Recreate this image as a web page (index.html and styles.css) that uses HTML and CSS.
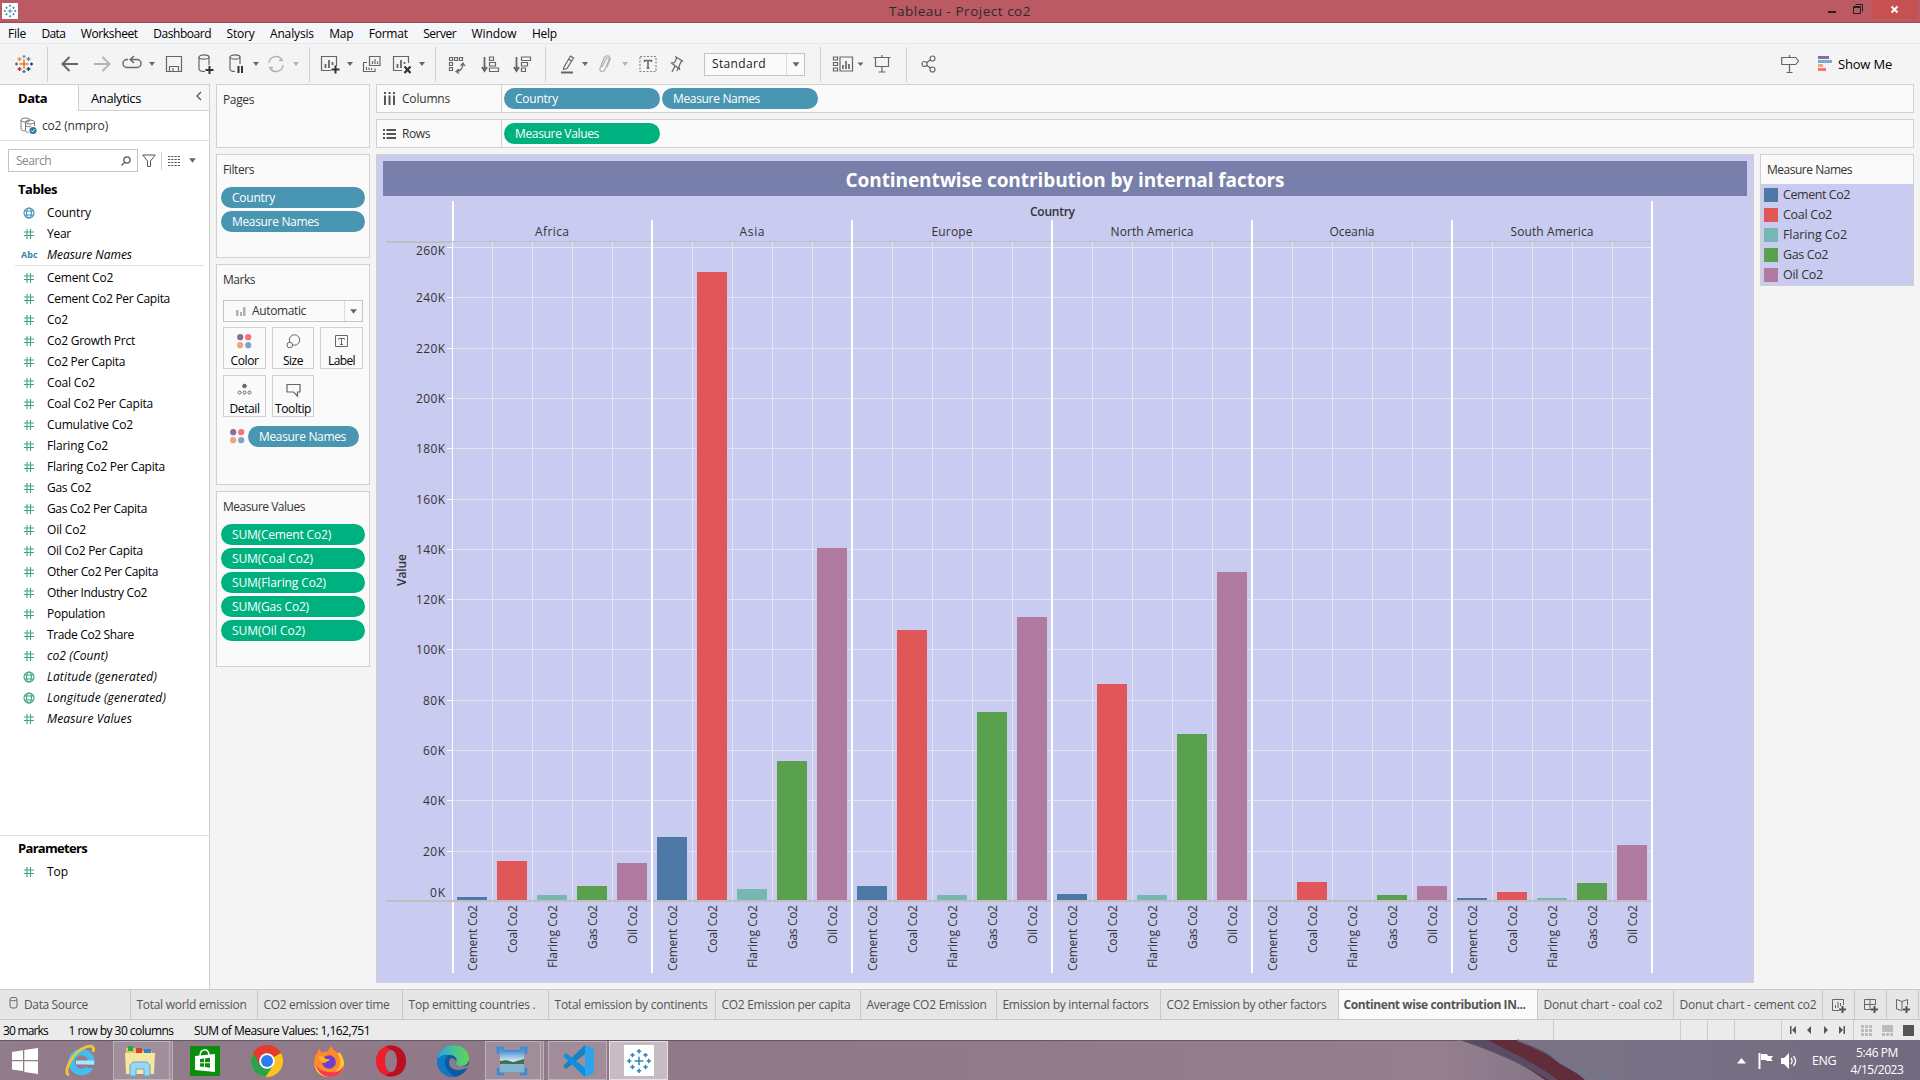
FILE: index.html
```html
<!DOCTYPE html>
<html lang="en">
<head>
<meta charset="utf-8">
<title>Tableau - Project co2</title>
<link rel="stylesheet" href="styles.css">
</head>
<body>
<svg class="defs" width="0" height="0">
  <symbol id="caret" viewBox="0 0 8 6"><path d="M1 1h6L4 5z" fill="#666"/></symbol>
  <symbol id="caret-off" viewBox="0 0 8 6"><path d="M1 1h6L4 5z" fill="#b4b4b4"/></symbol>
  <symbol id="hash" viewBox="0 0 12 12"><path d="M4 1v10M7.500 1v10M1 4h10M1 7.500h10" stroke="#3ca579" stroke-width="1.100" fill="none"/></symbol>
  <symbol id="globe" viewBox="0 0 12 12"><g fill="none" stroke="currentColor" stroke-width="1.100"><circle cx="6" cy="6" r="5"/><ellipse cx="6" cy="6" rx="2.400" ry="5"/><path d="M1.300 4h9.400M1.300 8h9.400"/></g></symbol>
  <symbol id="dots" viewBox="0 0 15 15"><circle cx="3.200" cy="3.200" r="3.100" fill="#86709a"/><circle cx="11.200" cy="3.200" r="3.100" fill="#fa707e"/><circle cx="3.200" cy="11.200" r="3.100" fill="#f2a477"/><circle cx="11.200" cy="11.200" r="3.100" fill="#81a3cb"/></symbol>
  <symbol id="marks" viewBox="0 0 24 24"><path d="M12 8v8M8 12h8M12 1v4M10 3h4M12 19v4M10 21h4M3 10v4M1 12h4M21 10v4M19 12h4M6 4.500v4M4 6.500h4M18 4.500v4M16 6.500h4M6 15.500v4M4 17.500h4M18 15.500v4M16 17.500h4" fill="none" stroke="currentColor" stroke-width="1.400"/></symbol>
</svg>

<header class="titlebar">
  <span class="appicon"><svg width="14" height="14"><use href="#marks"/></svg></span>
  <span class="title"><span data-w="142">Tableau - Project co2</span></span>
  <span class="winbtns">
    <svg width="10" height="20"><path d="M1 12h8" stroke="#222" stroke-width="2"/></svg>
    <svg width="12" height="20"><path d="M1.500 6.500h7v7h-7zM1.500 7.500h7M3.500 4.500h7v7" fill="none" stroke="#222"/></svg>
    <span class="close"><svg width="10" height="10"><path d="M1.500 1.500l6 6M7.500 1.500l-6 6" stroke="#fff" stroke-width="1.900"/></svg></span>
  </span>
</header>

<nav class="menu">
  <span data-w="18">File</span><span data-w="24">Data</span><span data-w="57">Worksheet</span><span data-w="58">Dashboard</span><span data-w="28">Story</span><span data-w="44">Analysis</span><span data-w="24">Map</span><span data-w="39">Format</span><span data-w="33">Server</span><span data-w="45">Window</span><span data-w="25">Help</span>
</nav>

<div class="toolbar">
  <svg width="18" height="18" viewBox="0 0 18 18" fill="none" stroke-width="1.300"><path d="M9 4.500v9M4.500 9h9" stroke="#e8762c" stroke-width="1.600"/><path d="M9 0v3M7.500 1.500h3" stroke="#7199a6"/><path d="M4.500 2v4M2.500 4h4" stroke="#eb912c"/><path d="M13.500 2v4M11.500 4h4" stroke="#59879b"/><path d="M1.500 7.500v3M0 9h3" stroke="#5b6591"/><path d="M16.500 7.500v3M15 9h3" stroke="#1f447e"/><path d="M4.500 12v4M2.500 14h4" stroke="#c72035"/><path d="M13.500 12v4M11.500 14h4" stroke="#1f447e"/><path d="M9 15v3M7.500 16.500h3" stroke="#5b6591"/></svg>
  <i class="sep"></i>
  <svg class="ic" width="18" height="18"><path d="M17 9H2M8.500 2L1.500 9l7 7" stroke-width="2"/></svg>
  <svg class="ic off" width="18" height="18"><path d="M1 9h15M9.500 2l7 7-7 7" stroke-width="2"/></svg>
  <svg class="ic" width="20" height="18"><path d="M6 4.500H5a4 4 0 0 0 0 8h10a4 4 0 0 0 0-8H8M12 1L8.200 4.500 12 8" stroke-width="1.500"/></svg>
  <svg width="8" height="6"><use href="#caret"/></svg>
  <svg class="ic" width="18" height="18"><path d="M1.500 1.500h15v15h-15zM4.500 16.500v-5h9v5M8 13v3.500"/></svg>
  <svg class="ic" width="20" height="22"><path d="M9 18.500c-3.500 0-6-.8-6-2.500V4M13 4v8"/><ellipse cx="8" cy="4" rx="5" ry="2.200"/><path d="M13.500 13v8M9.500 17h8" stroke="#333" stroke-width="2"/></svg>
  <svg class="ic" width="20" height="22"><path d="M9 18.500c-3 0-5-.8-5-2.500V4M14 4v7"/><ellipse cx="9" cy="4" rx="5" ry="2.200"/><path d="M12.500 13v7M16 13v7" stroke="#333" stroke-width="2"/></svg>
  <svg width="8" height="6"><use href="#caret"/></svg>
  <svg class="ic off" width="18" height="18"><path d="M2 8a7 7 0 0 1 13-3M16 10a7 7 0 0 1-13 3M12 5.500h4M2 12.500h4" stroke-width="1.500"/></svg>
  <svg width="8" height="6"><use href="#caret-off"/></svg>
  <i class="sep"></i>
  <svg class="ic" width="20" height="20"><path d="M11 16.500H1.500v-14h15V12"/><path d="M5.500 14v-4M9 14V6M12.500 11V8" stroke-width="1.800"/><path d="M15.500 11.500v8M11.500 15.500h8" stroke="#333" stroke-width="2"/></svg>
  <svg width="8" height="6"><use href="#caret"/></svg>
  <svg class="ic" width="18" height="20"><path d="M6.500 2.500h10.500v9H6.500zM4 8.500H.5v9H12v-3M9.500 10V7M12 10V5M14.500 10V7.500M3.500 16v-3M6 16v-2.500M8.500 16v-2" stroke-width="1.200"/></svg>
  <svg class="ic" width="20" height="20"><path d="M10 16.500H1.500v-14h15V9"/><path d="M5.500 14v-4M9 14V6M12.500 10V8" stroke-width="1.800"/><path d="M12.500 12.500l6 6.500M18.500 12.500l-6 6.500" stroke="#333" stroke-width="2.200"/></svg>
  <svg width="8" height="6"><use href="#caret"/></svg>
  <i class="sep"></i>
  <svg class="ic" width="18" height="20"><path d="M1.500 3.500h3v3h-3zM6.500 3.500h3v3h-3zM11.500 3.500h3v3h-3zM1.500 8.500h3v3h-3zM1.500 13.500h3v3h-3zM8 17.500c4 0 7-3 7-7M11 15l-3 2.500 3 2M12.500 12l2.500-3 2 3" stroke-width="1.200"/></svg>
  <svg class="ic" width="19" height="18"><path d="M3.500 2v13M1 12l2.500 4L6 12" stroke-width="1.800"/><path d="M8.500 2h4v3.500h-4zM8.500 7.500h6V11h-6zM8.500 13h9v3.500h-9z" stroke-width="1.200"/></svg>
  <svg class="ic" width="19" height="18"><path d="M3.500 2v13M1 12l2.500 4L6 12" stroke-width="1.800"/><path d="M8.500 2h9v3.500h-9zM8.500 7.500h6V11h-6zM8.500 13h4v3.500h-4z" stroke-width="1.200"/></svg>
  <i class="sep"></i>
  <svg class="ic" width="16" height="20"><path d="M4 13l6.500-11 3 2L7 14.500l-3.500 1zM8.500 5l3 2"/><path d="M1 18.500h12" stroke-width="2"/></svg>
  <svg width="8" height="6"><use href="#caret"/></svg>
  <svg class="ic off" width="14" height="20"><path d="M4 13l4-8c1-2 3.500-1 3 1L7 15.500c-1.500 3.500-6 2-5-1L6 4c1.500-3.500 7-2.500 6 1.500L9 13" stroke-width="1.300"/></svg>
  <svg width="8" height="6"><use href="#caret-off"/></svg>
  <svg class="ic" width="18" height="18"><path d="M1 1.500h16v15H1z" stroke-dasharray="2 1.500" stroke="#888"/><path d="M5.500 7V5.500h7V7M9 5.500v7.500M7.500 13h3" stroke-width="1.500"/></svg>
  <svg class="ic" width="14" height="20"><path d="M6 3l6.500 4-1.500 1-2 4 .5 3L1.500 9l3-.5 2-4zM5 12l-3 6M8 14l-1 3"/></svg>
  <div class="select"><span data-w="54">Standard</span><b><svg width="10" height="7"><use href="#caret"/></svg></b></div>
  <i class="sep"></i>
  <svg class="ic" width="30" height="18"><path d="M.5 2h4v3h-4zM.5 7.500h4v3h-4zM.5 13h4v3h-4zM7 2h12.500v14H7z"/><path d="M10 14v-4M13 14V6M16 14V9" stroke-width="1.700"/><path d="M24.500 7.500h6l-3 3.500z" fill="#666" stroke="none"/></svg>
  <svg class="ic" width="18" height="18"><path d="M.5 2.500h17M9 0v2M2.500 2.500v9h13v-9M9 11.500v5M5.500 17h7"/></svg>
  <i class="sep"></i>
  <svg class="ic" width="16" height="18"><circle cx="3.500" cy="9" r="2.500"/><circle cx="11.500" cy="3.500" r="2.500"/><circle cx="11.500" cy="14.500" r="2.500"/><path d="M5.700 7.700L9 5M5.700 10.300L9.300 13"/></svg>
  <span></span>
  <svg class="ic" width="18" height="20"><path d="M.7 3.500h14l2.800 3.500-2.800 3.500H.7zM8.500 1v2.500M8.500 10.500V19M5.500 18.500h6"/></svg>
  <div class="showme"><svg width="14" height="16"><path d="M0 0h11v3H0z" fill="#86709a"/><path d="M0 4h14v3H0z" fill="#7fa6d0"/><path d="M0 8h5v3H0z" fill="#f4a273"/><path d="M0 12h8v3H0z" fill="#fa707e"/></svg><span data-w="54">Show Me</span></div>
</div>

<main class="work">
  <aside class="data">
    <div class="tabs"><div class="tab on"><span data-w="29">Data</span></div><div class="tab"><span data-w="50">Analytics</span><svg width="6" height="10"><path d="M5 1L1 5l4 4" fill="none" stroke="#555" stroke-width="1.300"/></svg></div></div>
    <div class="source"><svg width="18" height="18" fill="none" stroke="#777"><ellipse cx="5.500" cy="3" rx="4.500" ry="2"/><path d="M1 3v9c0 1 1.500 2 4 2"/><ellipse cx="10" cy="5" rx="4.500" ry="2"/><path d="M5.500 5v8c0 2 2 2.500 3 2.500M14.500 5v4M6 9c2 1 4 1 5 0"/><circle cx="13" cy="13.500" r="3.600" fill="#2c7d9f" stroke="none"/><path d="M11.300 13.500l1.200 1.300 2.200-2.500" stroke="#fff"/></svg><span data-w="66">co2 (nmpro)</span></div>
    <div class="find">
      <div class="box"><span data-w="35">Search</span><svg width="10" height="10" fill="none" stroke="#555" stroke-width="1.200"><circle cx="6" cy="4" r="3.200"/><path d="M3.500 6.500L.5 9.500"/></svg></div>
      <svg width="14" height="14"><path d="M.7 1h12.600L8.500 7v5.500h-3V7z" fill="none" stroke="#555"/></svg>
      <i></i>
      <svg width="13" height="10" stroke="#555"><path d="M0 .5h12M0 3.500h12M0 6.500h12M0 9.500h12" stroke-dasharray="2.250 1" stroke-width="1.200" fill="none"/></svg>
      <svg width="9" height="7"><use href="#caret"/></svg>
    </div>
    <h2><span data-w="39">Tables</span></h2>
    <ul class="fields" id="dims"></ul>
    <ul class="fields measures" id="measures"></ul>
    <div class="params"><h2><span data-w="69">Parameters</span></h2><ul class="fields" id="params"></ul></div>
  </aside>

  <section class="cards">
    <div class="card pages"><h3><span data-w="31">Pages</span></h3></div>
    <div class="card filters"><h3><span data-w="31">Filters</span></h3>
      <div class="pill"><span data-w="43">Country</span></div><div class="pill"><span data-w="87">Measure Names</span></div></div>
    <div class="card markscard"><h3><span data-w="32">Marks</span></h3>
      <div class="marktype"><svg width="12" height="12" fill="#b0b0b0"><path d="M1 5h2.500v6H1zM5 7h2v4H5zM8 2h2.500v9H8z"/></svg><span data-w="54">Automatic</span><b><svg width="9" height="7"><use href="#caret"/></svg></b></div>
      <div class="markgrid">
        <div><svg width="15" height="15"><use href="#dots"/></svg><span data-w="28">Color</span></div>
        <div><svg width="15" height="15" fill="none" stroke="#666"><circle cx="8.500" cy="6" r="5.200"/><circle cx="3.800" cy="11" r="2.800" fill="#fafafa"/></svg><span data-w="20">Size</span></div>
        <div><svg width="15" height="15" fill="none" stroke="#666"><path d="M1.500 1.500h12v11h-12zM4.500 5.500v-1h6v1M7.500 4.500v6M6 10.500h3"/></svg><span data-w="27">Label</span></div>
        <div><svg width="15" height="15" fill="none" stroke="#666"><circle cx="7.500" cy="4" r="1.800" fill="#666"/><circle cx="2.500" cy="10.500" r="1.500"/><circle cx="7.500" cy="10.500" r="1.500"/><circle cx="12.500" cy="10.500" r="1.500"/></svg><span data-w="30">Detail</span></div>
        <div><svg width="15" height="15" fill="none" stroke="#666" stroke-width="1.200"><path d="M1 2.500h13v7.500h-2.500v4L7.500 10H1z"/></svg><span data-w="36">Tooltip</span></div>
      </div>
      <div class="encode"><svg width="15" height="15"><use href="#dots"/></svg><div class="pill"><span data-w="87">Measure Names</span></div></div>
    </div>
    <div class="card values"><h3><span data-w="82">Measure Values</span></h3>
      <div class="pill g"><span data-w="99">SUM(Cement Co2)</span></div><div class="pill g"><span data-w="81">SUM(Coal Co2)</span></div><div class="pill g"><span data-w="94">SUM(Flaring Co2)</span></div><div class="pill g"><span data-w="77">SUM(Gas Co2)</span></div><div class="pill g"><span data-w="73">SUM(Oil Co2)</span></div></div>
  </section>

  <section class="view">
    <div class="shelf"><div class="name"><svg width="13" height="14" fill="#555"><path d="M1 0h2v2H1zM5.500 0h2v2h-2zM10 0h2v2h-2zM1 3.500h2V13H1zM5.500 3.500h2V13h-2zM10 3.500h2V13h-2z"/></svg><span data-w="48">Columns</span></div><div class="pill"><span data-w="43">Country</span></div><div class="pill"><span data-w="87">Measure Names</span></div></div>
    <div class="shelf"><div class="name"><svg width="13" height="14" fill="#555"><path d="M0 2h2v2H0zM0 6h2v2H0zM0 10h2v2H0zM3.500 2H13v2H3.500zM3.500 6H13v2H3.500zM3.500 10H13v2H3.500z"/></svg><span data-w="28">Rows</span></div><div class="pill g"><span data-w="84">Measure Values</span></div></div>
    <div class="canvas">
      <div class="viz">
        <h1><span data-w="439">Continentwise contribution by internal factors</span></h1>
        <svg id="chart" width="1364" height="784" viewBox="383 197 1364 784"></svg>
      </div>
      <div class="legend"><h3><span data-w="85">Measure Names</span></h3><ul id="legend"></ul></div>
    </div>
  </section>
</main>

<nav class="sheets">
  <div class="ds"><svg width="9" height="12" fill="none" stroke="#666"><rect x="1" y=".5" width="7" height="10.500" rx="2"/><path d="M1 3c2 1 5 1 7 0"/></svg><span data-w="64">Data Source</span></div>
  <div><span data-w="110">Total world emission</span></div><div><span data-w="126">CO2 emission over time</span></div><div><span data-w="127">Top emitting countries .</span></div><div><span data-w="153">Total emission by continents</span></div><div><span data-w="129">CO2 Emission per capita</span></div><div><span data-w="120">Average CO2 Emission</span></div><div><span data-w="146">Emission by internal factors</span></div><div><span data-w="160">CO2 Emission by other factors</span></div><div class="on"><span data-w="182">Continent wise contribution IN...</span></div><div><span data-w="119">Donut chart - coal co2</span></div><div><span data-w="137">Donut chart - cement co2</span></div>
  <div class="add"><svg width="16" height="16" fill="none" stroke="#666"><path d="M8 12.500H1.500v-11h11V7M4.500 10V7M7 10V4M9.500 8V5"/><path d="M11.500 8v7M8 11.500h7" stroke="#555" stroke-width="2"/></svg></div>
  <div class="add"><svg width="16" height="16" fill="none" stroke="#666"><path d="M8 11.500H1.500v-10h11V7M7 1.500v10M1.500 6.500h11"/><path d="M11.500 8v7M8 11.500h7" stroke="#555" stroke-width="2"/></svg></div>
  <div class="add"><svg width="16" height="16" fill="none" stroke="#666"><path d="M7 12.500L1.500 11V1.500L7 3.500v9M7 3.500l5.500-2V7"/><path d="M11.500 8v7M8 11.500h7" stroke="#555" stroke-width="2"/></svg></div>
</nav>

<div class="status">
  <div><span data-w="45">30 marks</span><span data-w="105">1 row by 30 columns</span><span data-w="176">SUM of Measure Values: 1,162,751</span></div>
  <div></div><div></div><div></div><div></div>
  <div class="nav"><svg width="8" height="8"><path d="M1 0h1.500v8H1zM7 0v8L3 4z" fill="#555"/></svg><svg width="8" height="8"><path d="M6 0v8L2 4z" fill="#555"/></svg><svg width="8" height="8"><path d="M2 0v8l4-4z" fill="#555"/></svg><svg width="8" height="8"><path d="M5.500 0H7v8H5.500zM1 0v8l4-4z" fill="#555"/></svg></div>
  <div class="modes"><svg width="11" height="11" fill="#bcbcbc"><path d="M0 0h3v3H0zM4 0h3v3H4zM8 0h3v3H8zM0 4h3v3H0zM4 4h3v3H4zM8 4h3v3H8zM0 8h3v3H0zM4 8h3v3H4zM8 8h3v3H8z"/></svg><svg width="11" height="11" fill="#bcbcbc"><path d="M0 0h11v7H0zM0 8h3v3H0zM4 8h3v3H4zM8 8h3v3H8z"/></svg><svg width="11" height="11"><path d="M0 0h11v11H0z" fill="#555"/></svg></div>
</div>

<footer class="taskbar">
  <svg class="swoosh" width="520" height="40" viewBox="0 0 520 40"><defs><linearGradient id="sw" x1="0" x2="1"><stop offset="0" stop-color="#7d7488"/><stop offset="1" stop-color="#726b7f"/></linearGradient></defs><path d="M55 0H520V40H180C150 24 120 10 55 0z" fill="url(#sw)"/><path d="M75 0h42c16 7 28 10 36 18 6 7 22 12 32 22h-40C125 26 100 12 75 0z" fill="#632c3b"/><path d="M60 0h28c22 12 50 24 70 40h-9C122 24 95 12 60 0z" fill="#5a4c62"/><path d="M117 0c20 8 34 14 44 23 12 5 30 9 46 17" stroke="#607d95" stroke-width="2.500" fill="none" opacity=".45"/></svg>
  <svg width="26" height="26" fill="#fff"><path d="M0 4l11-1.700V12H0zM12.300 2L26 0v12H12.300zM0 13.300h11v9.800L0 21.500zM12.300 13.300H26V26l-13.700-2z"/></svg>
  <svg width="34" height="34" viewBox="2 0 34 34" fill="none"><circle cx="18.500" cy="18" r="10" stroke="#45bdf1" stroke-width="6.500"/><path d="M13 18.500h18" stroke="#a9e6ff" stroke-width="4"/><path d="M24 21h9v3h-9z" fill="#907a88"/><path d="M6 31C-1 29 10 7 23 3c6-2 9 0 7 5" stroke="#f3c532" stroke-width="2.800"/></svg>
  <div class="app stack"><svg width="34" height="34" viewBox="0 0 34 34"><path d="M3 4h9l2 3h15v22H3z" fill="#e4c363"/><path d="M5 2h5v5H5z" fill="#29a34a"/><path d="M13 4h6v5h-6z" fill="#d6412c"/><path d="M21 5h7v5h-7z" fill="#2f83cf"/><path d="M2 9h30l-1 21H3z" fill="#f8e59e"/><path d="M7 32V21l3-3h14l3 3v11h-6v-7h-8v7z" fill="#9cd5f0" stroke="#5ba9d3"/></svg></div>
  <svg width="30" height="30" viewBox="0 0 30 30"><path d="M0 0h30v30H0z" fill="#098f0b"/><path d="M5 10l20-2v18L5 24z" fill="#fff"/><path d="M10 10c0-8 9-8 9-1" fill="none" stroke="#fff" stroke-width="1.500"/><path d="M10 13l4-.5v3.700h-4zM15 12.400l5-.7v4.500h-5zM10 17.300h4V21l-4-.5zM15 17.300h5v4.500l-5-.7z" fill="#098f0b"/></svg>
  <svg width="32" height="32" viewBox="-16 -16 32 32"><circle r="16" fill="#fcc31e"/><path d="M0 0L-13.900-8A16 16 0 0 1 13.900-8z" fill="#e33b2e"/><path d="M0 0L-13.900-8A16 16 0 0 0-1.500 16L6.500 4z" fill="#2ba24c"/><path d="M0-8h13.900a16 16 0 0 0-27.800 0L-7 4z" fill="#e33b2e"/><circle r="7.800" fill="#fff"/><circle r="6" fill="#2a7cf0"/></svg>
  <svg width="32" height="32" viewBox="0 0 32 32"><path d="M4 8l2-4 3 4c2-2 4-2 6-1 0-3 2-5 4-6 0 4 4 5 6 8l1-2c3 3 5 8 5 12 0 8-7 13-15 13S1 26 1 18c0-4 1-7 3-10z" fill="#ff8a26"/><path d="M19 1c0 4 5 6 7 10 4 9-2 18-11 18-7 0-12-4-13-10 0 8 6 13 14 13S31 27 31 19c0-4-2-9-5-12l-1 2c-2-3-6-4-6-8z" fill="#ffc933"/><path d="M3 20c2 8 8 12 14 12 8 0 13-5 14-12-3 6-8 8-14 7-6 0-11-2-14-7z" fill="#f63a54"/><circle cx="16" cy="17" r="6.800" fill="#6c3fce"/><path d="M5 12c3-2 6 0 8 2 2 0 4 0 4 1l-4 2c-2 2-5 1-8-5z" fill="#ffb02e"/></svg>
  <svg width="30" height="32" viewBox="0 0 30 32"><path d="M15 .5C6 .5 0 7 0 16s6 15.500 15 15.500S30 25 30 16 24 .5 15 .5zm0 4.500c4 0 6 5 6 11s-2 11-6 11-6-5-6-11 2-11 6-11z" fill="#f01d2c" fill-rule="evenodd"/><path d="M15 .5C24 .5 30 7 30 16s-6 15.500-15 15.500c-2 0-4-.5-5.500-1l5.500-3.500c4 0 6-5 6-11s-2-11-6-11L9.500 1.500C11 1 13 .5 15 .5z" fill="#a20b1b" opacity=".7"/></svg>
  <svg width="32" height="32" viewBox="0 0 32 32"><defs><linearGradient id="ed" x1="0" x2="1"><stop offset="0" stop-color="#25a8e0"/><stop offset="1" stop-color="#63d754"/></linearGradient></defs><circle cx="16" cy="16" r="16" fill="#0c59a4"/><path d="M0 15C1 6 8 0 16 0c10 0 16 7 16 13 0 5-3 8-8 8-4 0-6-1-5-3 2-4-1-8-6-8C7 10 2 12 0 15z" fill="url(#ed)"/><path d="M0 15c2-4 7-6 12-5-5 3-5 10-2 14 2 4 6 7 9 7.600C8 33-1 25 0 15z" fill="#1478c8"/><path d="M13 14c-3 5 1 11 8 11 4 0 8-2 9-2l2-4c-3 3-5 2-8 2-4 0-6-1-5-3 1-3-4-6-6-4z" fill="#907a88"/></svg>
  <div class="app stack"><svg width="30" height="28" viewBox="0 0 30 28"><defs><linearGradient id="sky" x1="0" y1="0" x2="0" y2="1"><stop offset="0" stop-color="#3d86cf"/><stop offset="1" stop-color="#e4f3f8"/></linearGradient></defs><path d="M3 3h24v22H3z" fill="#7fb6d3"/><path d="M3 3h24v12H3z" fill="url(#sky)"/><path d="M3 14l6-1 7 2 11-3v5H3z" fill="#41714f"/><path d="M1 7V1h6M23 1h6v6M29 21v6h-6M7 27H1v-6" fill="none" stroke="#2f8fe0" stroke-width="2.500"/></svg></div>
  <i></i>
  <div class="app"><svg width="32" height="32" viewBox="0 0 32 32"><path d="M23 0l9 4v24l-9 4z" fill="#2aa4ee"/><path d="M23 0v9L4 24l-3-3z" fill="#1680c4"/><path d="M23 32v-9L4 8l-3 3z" fill="#0e8fe0"/></svg></div>
  <i></i>
  <div class="app live"><span class="tile"><svg width="26" height="26"><use href="#marks"/></svg></span></div>
  <span></span>
  <div class="tray"><svg width="9" height="6"><path d="M0 5.500L4.500 0 9 5.500z" fill="#fff"/></svg><svg width="16" height="18"><path d="M1.500 1v16" stroke="#fff" stroke-width="2"/><path d="M3 2h6l1 2h5l-2 3 2 2H9L8 8H3z" fill="#fff"/></svg><svg width="17" height="16"><path d="M0 5h3l5-5v16l-5-5H0z" fill="#fff"/><path d="M10 5c1.500 2 1.500 4 0 6M12.500 3c2.500 3 2.500 7 0 10" fill="none" stroke="#fff" stroke-width="1.300"/></svg><span class="lang"><span data-w="24">ENG</span></span><span class="clock"><span data-w="42">5:46 PM</span><span data-w="53">4/15/2023</span></span></div>
</footer>
<script src="app.js"></script>
</body>
</html>
```

FILE: styles.css
```css
* { box-sizing: border-box; margin: 0; padding: 0; }
body { width: 1920px; height: 1080px; overflow: hidden; background: #f4f4f4; color: #000; font: 12px/16px "Open Sans", "Noto Sans", sans-serif; display: flex; flex-direction: column; }
ul { list-style: none; }
svg { display: block; flex: none; overflow: visible; }
.defs { position: absolute; }
span { white-space: pre; }
h1, h2, h3 { font-weight: 400; }

.titlebar { height: 23px; flex: none; background: #bc5a64; border-bottom: 1px solid #9c4a53; display: grid; grid-template-columns: 200px 1fr 200px; }
.appicon { width: 16px; height: 16px; margin: 3px 0 0 2px; background: #fff; color: #2a7fae; display: grid; place-items: center; }
.title { font-size: 13.500px; line-height: 23px; color: #2b2b2b; text-align: center; }
.winbtns { display: flex; justify-content: flex-end; gap: 15px; padding-right: 3px; }
.close { width: 45px; height: 19px; background: #c75050; display: grid; place-items: center; margin-left: -7px; }

.menu { height: 21px; flex: none; background: #f5f6f7; border-bottom: 1px solid #e8e8e8; display: flex; gap: 15.400px; padding: 3px 0 0 8px; }

.toolbar { height: 40px; flex: none; display: grid; align-items: center; justify-items: center; grid-template-columns: 47px 1px 43px 22px 37px 4px 40px 24px 36px 4px 35px 6px 20px 22px 18px 25px 36px 4px 23px 20px 46px 18px 28px 18px 16px 24px 16px 29px 30px 125px 6px 50px 18px 31px 14px 1fr 18px 121px; }
.ic { fill: none; stroke: #666; stroke-width: 1.200; }
.off { stroke: #b4b4b4; }
.sep { width: 1px; height: 35px; background: #d0d0d0; margin-top: 1px; }
.select { width: 101px; height: 23px; border: 1px solid #c4c4c4; background: #fafafa; display: flex; justify-content: space-between; align-items: center; padding-left: 7px; color: #222; }
.select b, .marktype b { width: 18px; align-self: stretch; border-left: 1px solid #ddd; display: grid; place-items: center; }
.showme { display: flex; align-items: center; gap: 6px; justify-self: start; padding-left: 19px; font-size: 13px; }

.work { height: 905px; flex: none; display: grid; grid-template-columns: 210px 166px 1fr; }
.data { background: #fff; border: 1px solid #d0d0d0; border-left: 0; border-bottom: 0; height: 905px; display: flex; flex-direction: column; }
.tabs { display: flex; height: 26px; font-size: 13px; flex: none; }
.tab { flex: 1; background: #f8f8f8; border: 1px solid #d0d0d0; border-width: 0 0 1px 1px; display: flex; justify-content: space-between; align-items: center; padding: 0 7px 0 12px; }
.tab svg { margin-top: -4px; }
.tab.on { flex: 0 0 78px; background: #fff; border: 0; padding-left: 18px; font-weight: 700; }
.source { height: 30px; flex: none; border-bottom: 1px solid #e0e0e0; display: flex; align-items: center; gap: 4px; padding-left: 20px; color: #333; }
.find { margin: 8px 0 0 8px; display: flex; align-items: center; }
.find .box { width: 130px; height: 23px; border: 1px solid #c4c4c4; display: flex; align-items: center; justify-content: space-between; padding: 0 6px 0 7px; color: #888; margin-right: 4px; }
.find i { width: 1px; height: 18px; background: #d0d0d0; margin: 0 6px 0 5px; }
.find svg:last-child { margin-left: 7px; }
.data h2 { font-size: 13px; font-weight: 700; line-height: 18px; padding-left: 18px; margin: 8px 0 4px; }
.fields li { height: 21px; line-height: 20px; display: grid; grid-template-columns: 12px 1fr; column-gap: 12px; align-items: center; padding-left: 23px; }
.fields .calc > span { font-style: italic; }
.fields .abc { font: 700 9px/12px "Open Sans", sans-serif; color: #3c83a3; margin-left: -2px; }
.dim { color: #3f8fb5; }
.mea { color: #3ca579; }
.measures { border-top: 1px solid #e0e0e0; margin: 0 5px 0 15px; padding-top: 1px; }
.measures li { padding-left: 8px; }
.data .params { margin-top: auto; height: 154px; border-top: 1px solid #e0e0e0; }
.data .params h2 { margin: 3px 0 4px; }

.cards { padding: 0 6px; display: flex; flex-direction: column; gap: 6px; }
.card { background: #fafafa; border: 1px solid #d0d0d0; padding: 7px 4px 0; flex: none; }
.card h3, .legend h3 { padding-left: 2px; color: #333; font-size: 12px; line-height: 16px; }
.pages { height: 64px; }
.filters { height: 104px; }
.filters h3 { margin-bottom: 9px; }
.filters .pill + .pill { margin-top: 3px; }
.markscard { height: 221px; }
.values { height: 176px; }
.values h3 { margin-bottom: 9px; }
.values .pill { margin-bottom: 3px; }
.pill { height: 21px; border-radius: 11px; background: #4996b2; color: #fff; line-height: 21px; padding-left: 11px; }
.pill.g { background: #00b180; }
.marktype { margin: 12px 2px 5px 2px; height: 22px; border: 1px solid #c4c4c4; display: flex; align-items: center; padding-left: 11px; gap: 5px; color: #333; }
.marktype b { margin-left: auto; }
.markgrid { margin: 0 1px 0 2px; display: grid; grid-template-columns: 43px 42px 43px; grid-auto-rows: 42px; column-gap: 6px; row-gap: 6px; }
.markgrid div { border: 1px solid #d0d0d0; display: flex; flex-direction: column; align-items: center; padding-top: 6px; gap: 4px; line-height: 16px; }
.encode { display: flex; align-items: center; margin: 9px 6px 0 9px; gap: 3px; }
.encode .pill { flex: 1; }

.view { padding-right: 6px; display: flex; flex-direction: column; gap: 6px; }
.shelf { height: 29px; flex: none; border: 1px solid #d0d0d0; background: #fafafa; display: flex; align-items: center; gap: 2px; }
.shelf .name { width: 125px; height: 27px; border-right: 1px solid #d0d0d0; display: flex; align-items: center; gap: 6px; padding: 1px 0 0 6px; color: #333; }
.shelf .pill { width: 156px; line-height: 22px; }
.canvas { display: flex; justify-content: space-between; align-items: flex-start; }
.viz { width: 1378px; height: 829px; background: #c9cbf0; border: 1px solid #d0d0d0; padding: 6px; }
.viz h1 { height: 35px; margin-bottom: 1px; background: #787faa; color: #fff; font-size: 19px; font-weight: 700; line-height: 38px; text-align: center; }
.viz text { font: 12px "Open Sans", sans-serif; fill: #333; }
.viz text.b { font-weight: 600; }
.legend { width: 154px; height: 132px; border: 1px solid #d0d0d0; background: #c9cbf0; }
.legend h3 { background: #fafafa; height: 29px; padding: 7px 0 0 6px; }
.legend li { height: 20px; display: flex; align-items: center; gap: 5px; padding-left: 3px; color: #333; font-size: 12.500px; }
.legend ul { padding-top: 1px; }
.swatch { width: 14px; height: 14px; }

.sheets { height: 31px; flex: none; background: #e6e6e6; border: 1px solid #c8c8c8; border-width: 1px 0; display: grid; grid-template-columns: 131px 127px 145px 146px 167px 145px 136px 164px 178px 199px 136px 149px 32px 32px 32px; color: #555; }
.sheets div { border-right: 1px solid #c8c8c8; padding: 7px 0 0 5.500px; }
.sheets .ds { display: flex; gap: 6px; padding-left: 9px; }
.sheets .on { background: #fafafa; font-weight: 700; padding-left: 4.500px; }
.sheets .add { padding: 8px 0 0 8px; }

.status { height: 20px; flex: none; background: #ebebeb; display: grid; grid-template-columns: 1554px 127px 27px 27px 47px 72px 1fr; }
.status div { border-right: 1px solid #ccc; }
.status div:first-child { display: flex; gap: 20.500px; padding: 3px 0 0 3px; }
.status .nav { display: flex; align-items: center; justify-content: space-around; padding: 0 3px; }
.status .modes { display: flex; align-items: center; gap: 10px; padding-left: 7px; border: 0; }

.taskbar { height: 40px; flex: none; position: relative; border-top: 1px solid #635866; background: linear-gradient(90deg, #927c8b, #8f7887 40%, #957f8e 75%, #746c80 86%); display: grid; align-items: center; justify-items: center; grid-template-columns: 50px 63px 60px 64px 60px 64px 60px 64px 59px 4px 59px 2px 59px 1fr 183px; }
.swoosh { position: absolute; right: 0; top: -1px; }
.app { align-self: stretch; justify-self: stretch; border: 1px solid #bfb0ba; background: rgba(255, 255, 255, .15); display: grid; place-items: center; }
.stack { border-right: 4px double #bfb0ba; padding-right: 3px; }
.live { background: rgba(255, 255, 255, .5); border-color: #e8e0e5; }
.tile { width: 30px; height: 31px; background: #fff; color: #2f86b5; display: grid; place-items: center; }
.tray { position: relative; justify-self: stretch; height: 39px; display: grid; align-items: center; justify-items: center; grid-template-columns: 9px 39px 9px 60px 46px; color: #fff; }
.clock { display: grid; justify-items: center; line-height: 17px; font-size: 12px; }
.lang { font-size: 12.500px; }
```

FILE: app.js
```js
const dims = [['globe', 'Country', 44], ['hash', 'Year', 24], ['abc', 'Measure Names', 85, 1]];
const measures = [['hash', 'Cement Co2', 66], ['hash', 'Cement Co2 Per Capita', 123], ['hash', 'Co2', 21], ['hash', 'Co2 Growth Prct', 88], ['hash', 'Co2 Per Capita', 78], ['hash', 'Coal Co2', 48], ['hash', 'Coal Co2 Per Capita', 106], ['hash', 'Cumulative Co2', 86], ['hash', 'Flaring Co2', 61], ['hash', 'Flaring Co2 Per Capita', 118], ['hash', 'Gas Co2', 44], ['hash', 'Gas Co2 Per Capita', 100], ['hash', 'Oil Co2', 39], ['hash', 'Oil Co2 Per Capita', 96], ['hash', 'Other Co2 Per Capita', 111], ['hash', 'Other Industry Co2', 100], ['hash', 'Population', 58], ['hash', 'Trade Co2 Share', 87], ['hash', 'co2 (Count)', 61, 1], ['globe', 'Latitude (generated)', 110, 1], ['globe', 'Longitude (generated)', 119, 1], ['hash', 'Measure Values', 85, 1]];

function fieldRows(id, rows, tone) {
  document.getElementById(id).innerHTML = rows.map(([icon, name, w, calc]) => {
    const mark = icon === 'abc' ? '<b class="abc">Abc</b>' : `<svg class="${tone}" width="12" height="12"><use href="#${icon}"/></svg>`;
    return `<li class="${calc ? 'calc' : ''}">${mark}<span><span data-w="${w}">${name}</span></span></li>`;
  }).join('');
}
fieldRows('dims', dims, 'dim');
fieldRows('measures', measures, 'mea');
fieldRows('params', [['hash', 'Top', 21]], 'mea');

const series = [['Cement Co2', '#4e79a7', 66], ['Coal Co2', '#e15759', 48], ['Flaring Co2', '#76b7b2', 63], ['Gas Co2', '#59a14f', 44], ['Oil Co2', '#b07aa1', 39]];
document.getElementById('legend').innerHTML = series.map(([n, c, w]) =>
  `<li><svg class="swatch"><rect width="14" height="14" fill="${c}"/></svg><span data-w="${w + 1}">${n}</span></li>`).join('');

// Bar heights in pixels above the zero line, one row per continent
const regions = [
  ['Africa', 34, [3, 39, 5, 14, 37]],
  ['Asia', 25, [63, 628, 11, 139, 352]],
  ['Europe', 41, [14, 270, 5, 188, 283]],
  ['North America', 83, [6, 216, 5, 166, 328]],
  ['Oceania', 45, [0, 18, 0, 5, 14]],
  ['South America', 83, [2, 8, 2, 17, 55]]
];
const X0 = 452, CELL = 40, ZERO = 900;
const rect = (x, y, w, h, f) => `<rect x="${x}" y="${y}" width="${w}" height="${h}" fill="${f}"/>`;
const label = (x, y, w, s, extra = '') => `<text x="${x}" y="${y}" textLength="${w}" ${extra}>${s}</text>`;
let out = '';
for (let i = 0; i < 13; i++) {
  const y = Math.round(247 + 50.3 * i);
  out += rect(447, y, 1205, 1, '#e4e4ec');
  out += rect(447, y, 5, 1, '#fff');
  const s = (260 - 20 * i) + 'K';
  const w = s.length > 3 ? 29 : 22;
  out += label(445 - w, i ? y + 5 : 255, w, s);
}
out += label(430, 897, 15, '0K');
for (let i = 1; i < 30; i++) if (i % 5) out += rect(X0 + i * CELL, 242, 1, 663, '#e4e4e6');
out += rect(452, 241, 1, 660, '#fff');
regions.forEach(([name, w, bars], r) => {
  const left = X0 + r * 200;
  out += label(left + 100 - w / 2, 236, w, name);
  bars.forEach((h, i) => {
    const x = left + i * CELL;
    if (h) out += rect(x + 5, ZERO - h, 30, h, series[i][1]);
    const tw = series[i][2];
    out += `<text transform="translate(${x + 25} ${905 + tw}) rotate(-90)" textLength="${tw}">${series[i][0]}</text>`;
  });
});
out += rect(386, 241, 1266, 1, '#c0c0c4') + rect(386, 242, 66, 1, '#c0c0c4') + rect(386, 900, 1266, 2, '#c0c0c4');
for (let r = 1; r < 6; r++) out += rect(X0 + r * 200 - 1, 220, 2, 753, '#fff');
out += rect(452, 201, 2, 40, '#fff') + rect(452, 902, 2, 71, '#fff') + rect(1651, 201, 2, 772, '#fff');
out += label(1030, 216, 45, 'Country', 'class="b"');
out += '<text class="b" transform="translate(406 586) rotate(-90)" textLength="32">Value</text>';
document.getElementById('chart').innerHTML = out;

// Tracks each label so that it fills its slot whichever font is in use
document.querySelectorAll('[data-w]').forEach(el => {
  const gap = el.dataset.w - el.getBoundingClientRect().width;
  el.style.letterSpacing = gap / el.textContent.length + 'px';
});
```
